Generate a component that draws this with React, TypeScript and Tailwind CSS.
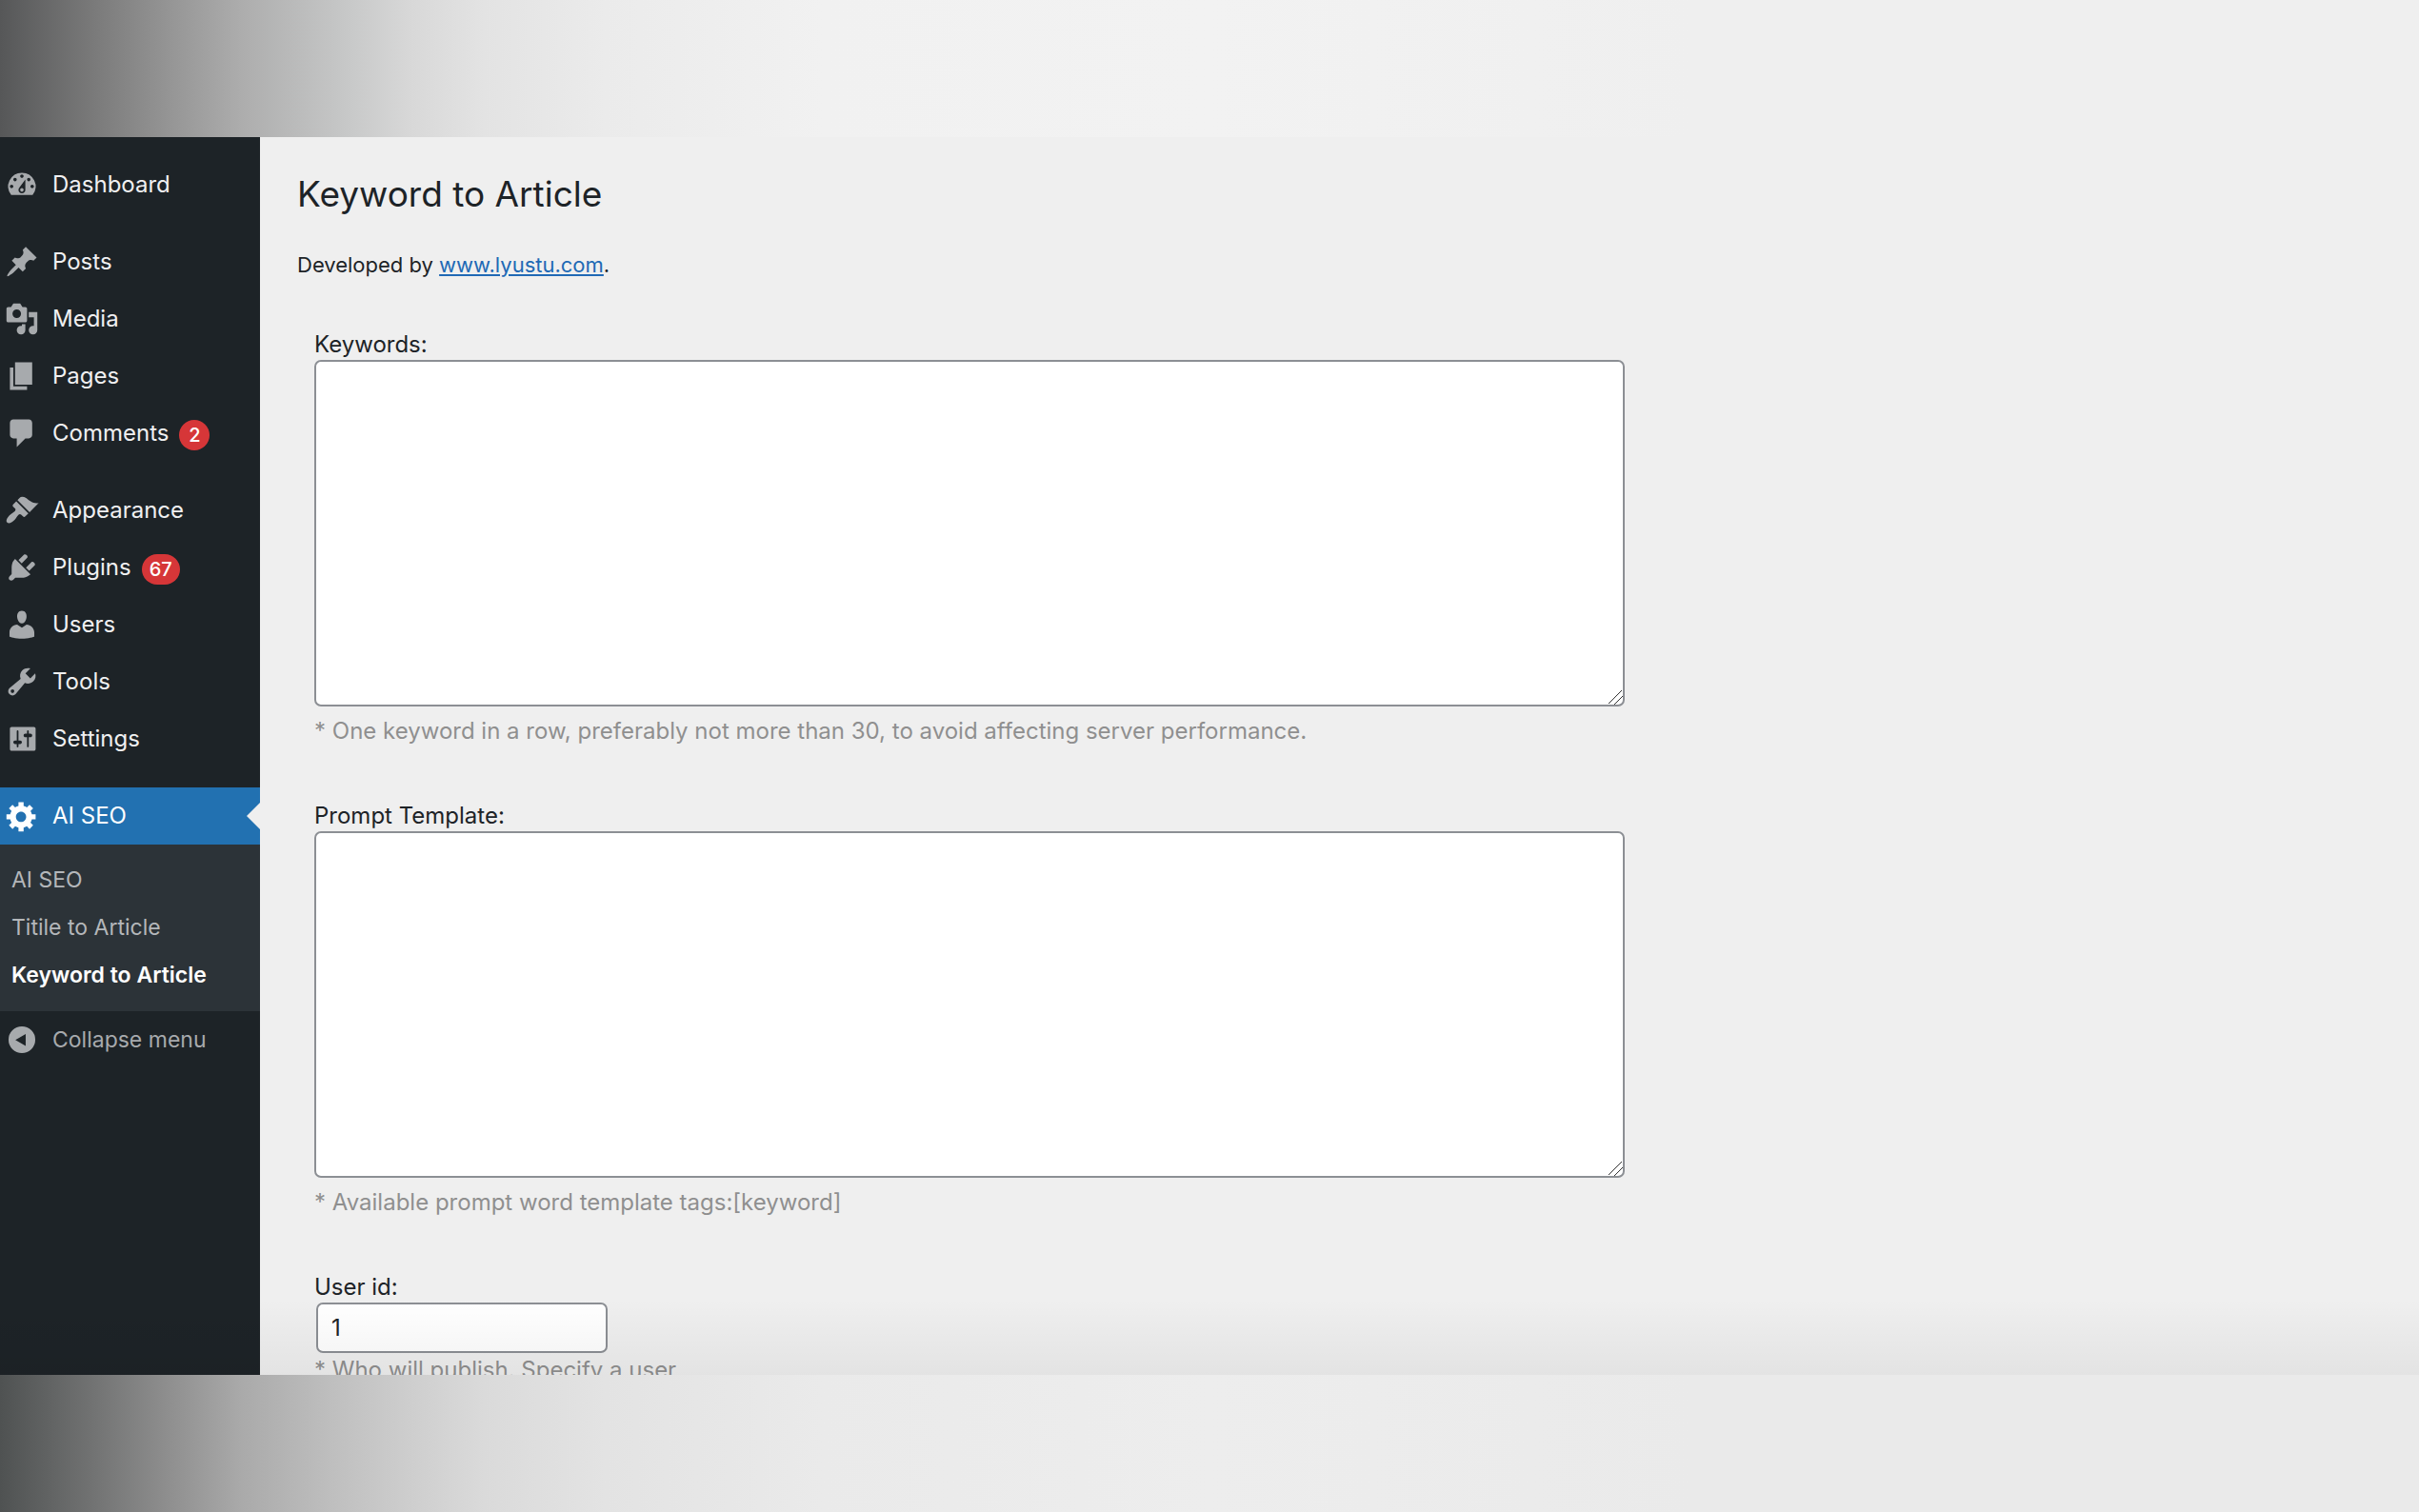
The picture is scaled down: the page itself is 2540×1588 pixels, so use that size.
import { useState } from "react";

interface IMenuItem {
  title: string;
  icon: string;
  badge?: number;
}

const menuGroups: IMenuItem[][] = [
  [
    {
      title: "Dashboard",
      icon: "M3.76 16h12.48A7.998 7.998 0 0 0 10 3a7.998 7.998 0 0 0-6.24 13zM10 4c.55 0 1 .45 1 1s-.45 1-1 1-1-.45-1-1 .45-1 1-1zM6 6c.55 0 1 .45 1 1s-.45 1-1 1-1-.45-1-1 .45-1 1-1zm8 0c.55 0 1 .45 1 1s-.45 1-1 1-1-.45-1-1 .45-1 1-1zm-5.37 5.55L12 7v6c0 1.1-.9 2-2 2s-2-.9-2-2c0-.57.24-1.08.63-1.45zM4 10c.55 0 1 .45 1 1s-.45 1-1 1-1-.45-1-1 .45-1 1-1zm12 0c.55 0 1 .45 1 1s-.45 1-1 1-1-.45-1-1 .45-1 1-1zm-5 3c0-.55-.45-1-1-1s-1 .45-1 1 .45 1 1 1 1-.45 1-1z",
    },
  ],
  [
    {
      title: "Posts",
      icon: "M10.44 3.02l1.82-1.82 6.36 6.35-1.83 1.82c-1.05-.68-2.48-.57-3.41.36l-.75.75c-.92.93-1.04 2.35-.35 3.41l-1.83 1.82-2.41-2.41-2.8 2.79c-.42.42-3.38 2.71-3.8 2.29s1.86-3.39 2.28-3.81l2.79-2.79L4.1 9.36l1.83-1.82c1.05.69 2.48.57 3.4-.36l.75-.75c.93-.92 1.05-2.35.36-3.41z",
    },
    {
      title: "Media",
      icon: "M13 11V4c0-.55-.45-1-1-1h-1.67L9 1H5L3.67 3H2c-.55 0-1 .45-1 1v7c0 .55.45 1 1 1h10c.55 0 1-.45 1-1zM7 4.5c1.38 0 2.5 1.12 2.5 2.5S8.38 9.5 7 9.5 4.5 8.38 4.5 7 5.62 4.5 7 4.5zM14 6h5v10.5c0 1.38-1.12 2.5-2.5 2.5S14 17.88 14 16.5s1.12-2.5 2.5-2.5c.17 0 .34.02.5.05V9h-3V6zm-4 8.05V13h2v3.5c0 1.38-1.12 2.5-2.5 2.5S7 17.88 7 16.5 8.12 14 9.5 14c.17 0 .34.02.5.05z",
    },
    {
      title: "Pages",
      icon: "M6 15V2h10v13H6zm-1 1h8v2H3V5h2v11z",
    },
    {
      title: "Comments",
      icon: "M5 2h9c1.1 0 2 .9 2 2v7c0 1.1-.9 2-2 2h-2l-5 5v-5H5c-1.1 0-2-.9-2-2V4c0-1.1.9-2 2-2z",
      badge: 2,
    },
  ],
  [
    {
      title: "Appearance",
      icon: "M14.48 11.06L7.41 3.99l1.5-1.5c.5-.56 2.3-.47 3.51.32 1.21.8 1.43 1.28 2.91 2.1 1.18.64 2.45 1.26 4.45.85zm-.71.71L6.7 4.7 4.93 6.47c-.39.39-.39 1.02 0 1.41l1.06 1.06c.39.39.39 1.03 0 1.42-.6.6-1.43 1.11-2.21 1.69-.35.26-.7.53-1.01.84C1.43 14.23.4 16.08 1.4 17.07c.99 1 2.84-.03 4.18-1.36.31-.31.58-.66.85-1.02.57-.78 1.08-1.61 1.69-2.21.39-.39 1.02-.39 1.41 0l1.06 1.06c.39.39 1.02.39 1.41 0z",
    },
    {
      title: "Plugins",
      icon: "M13.11 4.36L9.87 7.6 8 5.73l3.24-3.24c.35-.34 1.05-.2 1.56.32.52.51.66 1.21.31 1.55zm-8 1.77l.91-1.12 9.01 9.01-1.19.84c-.71.71-2.63 1.16-3.82 1.16H6.14L4.9 17.26c-.59.59-1.54.59-2.12 0-.59-.58-.59-1.53 0-2.12l1.24-1.24v-3.88c0-1.13.4-3.19 1.09-3.89zm7.26 3.97l3.24-3.24c.34-.35 1.04-.21 1.55.31.52.51.66 1.21.31 1.55l-3.24 3.25z",
      badge: 67,
    },
    {
      title: "Users",
      icon: "M10 9.25c-2.27 0-2.73-3.44-2.73-3.44C7 4.02 7.82 2 9.97 2c2.16 0 2.98 2.02 2.71 3.81 0 0-.41 3.44-2.68 3.44zm0 2.57L12.72 10c2.39 0 4.52 2.33 4.52 4.53v2.49s-3.65 1.13-7.24 1.13c-3.65 0-7.24-1.13-7.24-1.13v-2.49c0-2.25 1.94-4.48 4.47-4.48z",
    },
    {
      title: "Tools",
      icon: "M16.68 9.77c-1.34 1.34-3.3 1.67-4.95.99l-5.41 6.52c-.99.99-2.59.99-3.58 0s-.99-2.59 0-3.57l6.52-5.42c-.68-1.65-.35-3.61.99-4.95 1.28-1.28 3.12-1.62 4.72-1.06l-2.89 2.89 2.82 2.82 2.86-2.87c.53 1.58.18 3.39-1.08 4.65zM3.81 16.21c.4.39 1.04.39 1.43 0 .4-.4.4-1.04 0-1.43-.39-.4-1.03-.4-1.43 0-.39.39-.39 1.03 0 1.43z",
    },
    {
      title: "Settings",
      icon: "M18 16V4c0-.55-.45-1-1-1H4c-.55 0-1 .45-1 1v12c0 .55.45 1 1 1h13c.55 0 1-.45 1-1zM8 11h1c.55 0 1 .45 1 1s-.45 1-1 1H8v1.5c0 .28-.22.5-.5.5s-.5-.22-.5-.5V13H6c-.55 0-1-.45-1-1s.45-1 1-1h1V5.5c0-.28.22-.5.5-.5s.5.22.5.5V11zm5-2h-1c-.55 0-1-.45-1-1s.45-1 1-1h1V5.5c0-.28.22-.5.5-.5s.5.22.5.5V7h1c.55 0 1 .45 1 1s-.45 1-1 1h-1v5.5c0 .28-.22.5-.5.5s-.5-.22-.5-.5V9z",
    },
  ],
];

const gearIcon =
  "M18 12h-2.18c-.17.7-.44 1.35-.81 1.93l1.54 1.54-2.1 2.1-1.54-1.54c-.58.36-1.23.63-1.91.79V19H8v-2.18c-.68-.16-1.33-.43-1.91-.79l-1.54 1.54-2.12-2.12 1.54-1.54c-.36-.58-.63-1.23-.79-1.91H1V9.03h2.17c.16-.7.44-1.35.8-1.94L2.43 5.55l2.1-2.1 1.54 1.54c.58-.37 1.24-.64 1.93-.81V2h3v2.18c.68.16 1.33.43 1.91.79l1.54-1.54 2.12 2.12-1.54 1.54c.36.59.64 1.24.8 1.94H18V12zm-8.5 1.5c1.66 0 3-1.34 3-3s-1.34-3-3-3-3 1.34-3 3 1.34 3 3 3z";
const collapseIcon =
  "M10 2.2a7.8 7.8 0 1 0 0 15.6 7.8 7.8 0 0 0 0-15.6zM12.2 6.6v7L6.2 10.1z";

const submenu = ["AI SEO", "Titile to Article", "Keyword to Article"];

const Icon = ({ path }: { path: string }) => (
  <svg viewBox="0 0 20 20" className="size-9 shrink-0 fill-current" aria-hidden>
    <path fillRule="evenodd" d={path} />
  </svg>
);

const MenuItem = ({ data }: { data: IMenuItem }) => {
  return (
    <li>
      <a href="#" className="flex h-[60px] items-center pl-[5px] text-[#a7aaad]">
        <Icon path={data.icon} />
        <span className="pl-[14px] text-[#f0f0f1]">{data.title}</span>
        {data.badge && (
          <span className="mt-1 ml-[11px] flex h-8 min-w-8 items-center justify-center rounded-full bg-[#d63638] px-2 text-xl font-medium text-white">
            {data.badge}
          </span>
        )}
      </a>
    </li>
  );
};

const Sidebar = ({
  current,
  onSelect,
}: {
  current: string;
  onSelect: (title: string) => void;
}) => {
  return (
    <nav className="w-[273px] shrink-0 bg-[#1d2327] pt-5 text-2xl leading-8">
      <div className="flex flex-col gap-[21px]">
        {menuGroups.map((group) => (
          <ul key={group[0].title}>
            {group.map((item) => (
              <MenuItem key={item.title} data={item} />
            ))}
          </ul>
        ))}
        <div>
          <a
            href="#"
            className="relative flex h-[60px] items-center bg-[#2271b1] pl-[5px] text-white"
          >
            <Icon path={gearIcon} />
            <span className="pl-[14px]">AI SEO</span>
            <span className="absolute top-4 right-0 border-y-14 border-r-14 border-y-transparent border-r-[#efefef]" />
          </a>
          <ul className="bg-[#2c3338] pt-3 pb-[13px] text-[23px]">
            {submenu.map((title) => (
              <li key={title}>
                <a
                  href="#"
                  onClick={() => onSelect(title)}
                  className={
                    title === current
                      ? "flex h-[50px] items-center pl-3 font-semibold text-white"
                      : "flex h-[50px] items-center pl-3 text-[#b4b7ba]"
                  }
                >
                  {title}
                </a>
              </li>
            ))}
          </ul>
          <button className="flex h-[60px] w-full items-center pl-[5px] text-[23px] text-[#a7aaad]">
            <Icon path={collapseIcon} />
            <span className="pl-[14px]">Collapse menu</span>
          </button>
        </div>
      </div>
    </nav>
  );
};

const TextAreaField = ({
  id,
  label,
  hint,
}: {
  id: string;
  label: string;
  hint: string;
}) => {
  const [value, setValue] = useState<string>("");

  return (
    <div className="flex flex-col">
      <label htmlFor={id} className="pt-1 leading-8">
        {label}
      </label>
      <textarea
        id={id}
        value={value}
        onChange={(e) => setValue(e.target.value)}
        className="h-[364px] w-full max-w-[1376px] rounded-[7px] border-2 border-[#8c8f94] bg-white px-4 py-2 [&::-webkit-resizer]:bg-[linear-gradient(135deg,transparent_45%,#333_45%_50%,transparent_50%_68%,#333_68%_73%,transparent_73%)]"
      />
      <p className="pt-2 text-[#8f8f8f]">{hint}</p>
    </div>
  );
};

const App = () => {
  const [page, setPage] = useState<string>("Keyword to Article");
  const [userId, setUserId] = useState<string>("1");

  return (
    <div className="flex h-screen flex-col overflow-hidden bg-[#efefef] font-[Inter,'Liberation_Sans',sans-serif] text-[#1d2327]">
      <div className="h-36 shrink-0 bg-[linear-gradient(to_right,#565758,#7b7b7b_4%,#959595_7%,#adadad_10%,#c5c6c6_14%,#d8d8d8_17%,#e3e3e3_20%,#ebebeb_25%,#f1f1f1_34%,#f2f2f2_50%,#efefef_70%)]" />
      <div className="relative flex min-h-0 flex-1 overflow-hidden">
        <Sidebar current={page} onSelect={setPage} />
        <main className="flex-1 pt-8 pl-[39px]">
          <h1 className="text-[37px] leading-14">Keyword to Article</h1>
          <p className="pt-7 text-[22px] leading-9">
            Developed by{" "}
            <a href="#" className="text-[#2069b5] underline">
              www.lyustu.com
            </a>
            .
          </p>
          <form className="flex flex-col gap-[51px] pt-[46px] pl-[18px] text-2xl leading-9">
            <TextAreaField
              id="keywords"
              label="Keywords:"
              hint="* One keyword in a row, preferably not more than 30, to avoid affecting server performance."
            />
            <TextAreaField
              id="prompt"
              label="Prompt Template:"
              hint="* Available prompt word template tags:[keyword]"
            />
            <div className="flex flex-col items-start">
              <label htmlFor="user-id" className="pt-1 leading-8">
                User id:
              </label>
              <input
                id="user-id"
                type="text"
                value={userId}
                onChange={(e) => setUserId(e.target.value)}
                className="ml-0.5 h-[53px] w-[306px] rounded-[7px] border-2 border-[#8c8f94] bg-white px-[14px]"
              />
              <p className="text-[#8f8f8f]">* Who will publish. Specify a user</p>
            </div>
          </form>
        </main>
        <div className="pointer-events-none absolute right-0 bottom-0 left-0 h-20 bg-linear-to-b from-transparent to-black/5" />
      </div>
      <div className="h-36 shrink-0 bg-[linear-gradient(to_right,#4f5252,#737474_4%,#8f8f8f_7%,#aaaaaa_10%,#c0c0c0_14%,#cecece_17%,#dadada_20%,#e3e3e3_25%,#eaeaea_34%,#ededed_50%,#eaeaea_70%)]" />
    </div>
  );
};

export default App;
